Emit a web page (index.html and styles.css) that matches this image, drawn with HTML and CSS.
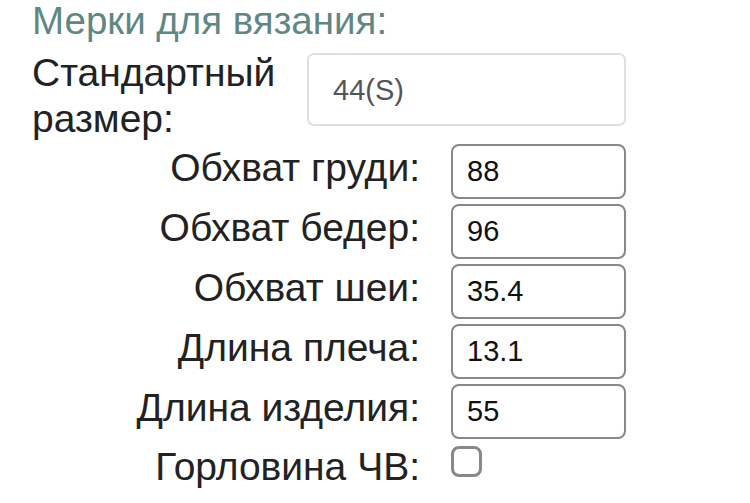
FILE: index.html
```html
<!DOCTYPE html>
<html lang="ru">
<head>
    <meta charset="UTF-8">
    <meta name="viewport" content="width=device-width, initial-scale=1.0">
    <title>Мерки для вязания</title>
    <link rel="stylesheet" href="styles.css">
</head>
<body>
    <div class="container">
        <h1>Мерки для вязания:</h1>

        <div class="size-row">
            <label for="size">Стандартный размер:</label>
            <div class="select-box" id="size">44(S)</div>
        </div>

        <form class="measures">
            <div class="row">
                <label for="chest">Обхват груди:</label>
                <input type="text" id="chest" value="88">
            </div>
            <div class="row">
                <label for="hips">Обхват бедер:</label>
                <input type="text" id="hips" value="96">
            </div>
            <div class="row">
                <label for="neck">Обхват шеи:</label>
                <input type="text" id="neck" value="35.4">
            </div>
            <div class="row">
                <label for="shoulder">Длина плеча:</label>
                <input type="text" id="shoulder" value="13.1">
            </div>
            <div class="row">
                <label for="length">Длина изделия:</label>
                <input type="text" id="length" value="55">
            </div>
            <div class="row check-row">
                <label for="neckline">Горловина ЧВ:</label>
                <input type="checkbox" id="neckline">
            </div>
        </form>
    </div>
</body>
</html>
```

FILE: styles.css
```css
* {
    margin: 0;
    padding: 0;
    box-sizing: border-box;
}

body {
    font-family: 'Liberation Sans', Arial, sans-serif;
    background: #ffffff;
    color: #222;
    font-size: 39px;
    line-height: 46px;
}

.container {
    padding: 1px 0 0 32px;
    width: 626px;
}

h1 {
    font-size: 38.5px;
    font-weight: 400;
    line-height: 40px;
    color: #5f8783;
}

.size-row {
    display: flex;
    align-items: flex-start;
    margin-top: 9px;
}

.size-row label {
    width: 275px;
}

.select-box {
    flex: 1;
    margin-top: 3px;
    height: 73px;
    padding-left: 24px;
    display: flex;
    align-items: center;
    font-size: 29px;
    color: #555;
    border: 2px solid #e0e0e0;
    border-radius: 7px;
}

.measures {
    display: flex;
    flex-direction: column;
    gap: 5px;
    margin-top: 2px;
}

.row {
    display: flex;
    align-items: flex-start;
    height: 55px;
}

.row label {
    width: 388px;
    margin-top: 1px;
    margin-right: 31px;
    text-align: right;
}

.row input[type="text"] {
    width: 175px;
    height: 55px;
    padding: 0 14px;
    font-family: inherit;
    font-size: 29px;
    color: #111;
    border: 2px solid #888;
    border-radius: 8px;
    outline: none;
}

.check-row label {
    margin-top: 0;
}

.row input[type="checkbox"] {
    appearance: none;
    -webkit-appearance: none;
    width: 31px;
    height: 31px;
    margin-top: 2px;
    border: 3px solid #888;
    border-radius: 8px;
    background: #fff;
}
```
